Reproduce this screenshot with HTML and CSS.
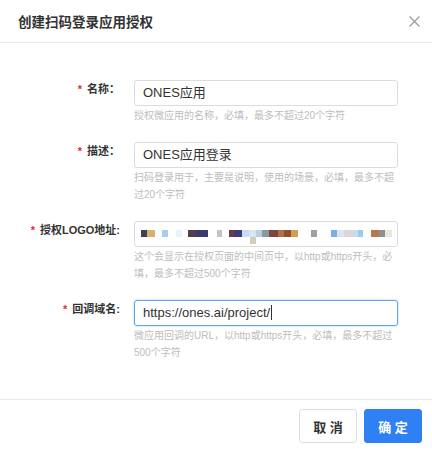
FILE: index.html
```html
<!DOCTYPE html>
<html lang="zh-CN">
<head>
    <meta charset="UTF-8">
    <meta name="viewport" content="width=device-width, initial-scale=1.0">
    <title>创建扫码登录应用授权</title>
    <link rel="stylesheet" href="styles.css">
</head>
<body>
    <div class="dialog">
        <div class="dialog-header">
            <h2 class="dialog-title">创建扫码登录应用授权</h2>
            <button class="close-btn" aria-label="关闭">
                <svg width="11" height="11" viewBox="0 0 11 11"><path d="M0.5 0.5L10.5 10.5M10.5 0.5L0.5 10.5" stroke="#9a9a9a" stroke-width="1.2" fill="none"/></svg>
            </button>
        </div>

        <div class="dialog-body">
            <div class="form-row">
                <label class="form-label"><span class="star">*</span>名称：</label>
                <div class="form-field">
                    <div class="field-input">ONES应用</div>
                    <div class="field-help">授权微应用的名称，必填，最多不超过20个字符</div>
                </div>
            </div>

            <div class="form-row">
                <label class="form-label"><span class="star">*</span>描述：</label>
                <div class="form-field">
                    <div class="field-input">ONES应用登录</div>
                    <div class="field-help">扫码登录用于，主要是说明，使用的场景，必填，最多不超过20个字符</div>
                </div>
            </div>

            <div class="form-row">
                <label class="form-label"><span class="star">*</span>授权LOGO地址:</label>
                <div class="form-field">
                    <div class="field-input mosaic">
                        <!-- blurred url -->
                        <svg width="262" height="24" viewBox="0 0 262 24">
                            <rect x="6" y="8" width="6" height="7" fill="#3d4050"/>
                            <rect x="12" y="8" width="8" height="7" fill="#d8b070"/>
                            <rect x="27" y="8" width="6" height="7" fill="#a6cef0"/>
                            <rect x="41" y="8" width="6" height="7" fill="#e6f3fb"/>
                            <rect x="53" y="8" width="8" height="7" fill="#583c4c"/>
                            <rect x="61" y="8" width="12" height="7" fill="#3a3c70"/>
                            <rect x="82" y="8" width="5" height="7" fill="#c4c4c4"/>
                            <rect x="94" y="8" width="5" height="7" fill="#6a3c48"/>
                            <rect x="99" y="8" width="8" height="7" fill="#3c3c78"/>
                            <rect x="107" y="8" width="7" height="7" fill="#c8dcee"/>
                            <rect x="114" y="8" width="7" height="7" fill="#d8e6f0"/>
                            <rect x="115" y="15" width="6" height="7" fill="#d4cbbb"/>
                            <rect x="121" y="8" width="6" height="7" fill="#b8cfe0"/>
                            <rect x="127" y="8" width="7" height="7" fill="#8898a8"/>
                            <rect x="134" y="8" width="9" height="7" fill="#7a4838"/>
                            <rect x="143" y="8" width="6" height="7" fill="#b07048"/>
                            <rect x="149" y="8" width="7" height="7" fill="#8a5030"/>
                            <rect x="156" y="8" width="7" height="7" fill="#d0a050"/>
                            <rect x="176" y="8" width="6" height="7" fill="#a0a0a0"/>
                            <rect x="196" y="8" width="6" height="7" fill="#7eaee0"/>
                            <rect x="202" y="8" width="7" height="7" fill="#d8e6f0"/>
                            <rect x="209" y="8" width="7" height="7" fill="#e0d4d8"/>
                            <rect x="216" y="8" width="7" height="7" fill="#c8dcec"/>
                            <rect x="223" y="8" width="5" height="7" fill="#9ccbe8"/>
                            <rect x="236" y="8" width="8" height="7" fill="#b87848"/>
                            <rect x="244" y="8" width="6" height="7" fill="#909090"/>
                            <rect x="250" y="8" width="7" height="7" fill="#e8e8dc"/>
                        </svg>
                    </div>
                    <div class="field-help">这个会显示在授权页面的中间页中，以http或https开头，必填，最多不超过500个字符</div>
                </div>
            </div>

            <div class="form-row">
                <label class="form-label"><span class="star">*</span>回调域名:</label>
                <div class="form-field">
                    <div class="field-input focused">https://ones.ai/project/<span class="caret"></span></div>
                    <div class="field-help">微应用回调的URL，以http或https开头，必填，最多不超过500个字符</div>
                </div>
            </div>
        </div>

        <div class="dialog-footer">
            <button class="btn">取 消</button>
            <button class="btn btn-primary">确 定</button>
        </div>
    </div>
</body>
</html>
```

FILE: styles.css
```css
body {
    margin: 0;
    background-color: #fff;
    font-family: "Liberation Sans", "Noto Sans CJK SC", sans-serif;
    color: #333;
}
.dialog {
    width: 432px;
    height: 450px;
    background-color: #fff;
}
.dialog-header {
    height: 42px;
    display: flex;
    align-items: center;
    justify-content: space-between;
    padding: 0 12px 0 18px;
    border-bottom: 1px solid #e9e9e9;
}
.dialog-title {
    margin: 0;
    font-size: 13.5px;
    font-weight: bold;
    color: #333;
}
.close-btn {
    background: none;
    border: none;
    padding: 0;
    width: 11px;
    height: 11px;
    display: flex;
    cursor: pointer;
}
.dialog-body {
    padding: 37px 0 38px;
}
.form-row {
    display: grid;
    grid-template-columns: 120px 266px;
    column-gap: 14px;
    margin-bottom: 18px;
}
.form-row:last-child {
    margin-bottom: 0;
}
.form-label {
    text-align: right;
    font-size: 11px;
    font-weight: bold;
    line-height: 18px;
    color: #333;
}
.star {
    color: #e0293a;
    margin-right: 5px;
}
.field-input {
    box-sizing: border-box;
    width: 264px;
    height: 26px;
    border: 1px solid #dcdcdc;
    border-radius: 3px;
    padding: 0 8px;
    font-size: 13px;
    line-height: 24px;
    color: #333;
    white-space: nowrap;
}
.field-input.mosaic {
    padding: 0;
    overflow: hidden;
}
.field-input.mosaic svg {
    display: block;
}
.field-input.focused {
    border-color: #5fa4f3;
    box-shadow: 0 0 2px rgba(64, 145, 240, 0.55);
}
.caret {
    display: inline-block;
    width: 1px;
    height: 15px;
    background-color: #333;
    vertical-align: -3px;
    margin-left: 1px;
}
.field-help {
    margin-top: 1px;
    font-size: 10px;
    line-height: 17px;
    color: #bdbdbd;
}
.dialog-footer {
    display: flex;
    justify-content: flex-end;
    gap: 7px;
    padding: 9px 10px 0;
    border-top: 1px solid #e9e9e9;
}
.btn {
    width: 58px;
    height: 34px;
    border: 1px solid #dedede;
    border-radius: 3px;
    background-color: #fff;
    color: #333;
    font-family: inherit;
    font-size: 13px;
    font-weight: bold;
    cursor: pointer;
}
.btn-primary {
    background-color: #2e80f4;
    border-color: #2e80f4;
    color: #fff;
}
```
